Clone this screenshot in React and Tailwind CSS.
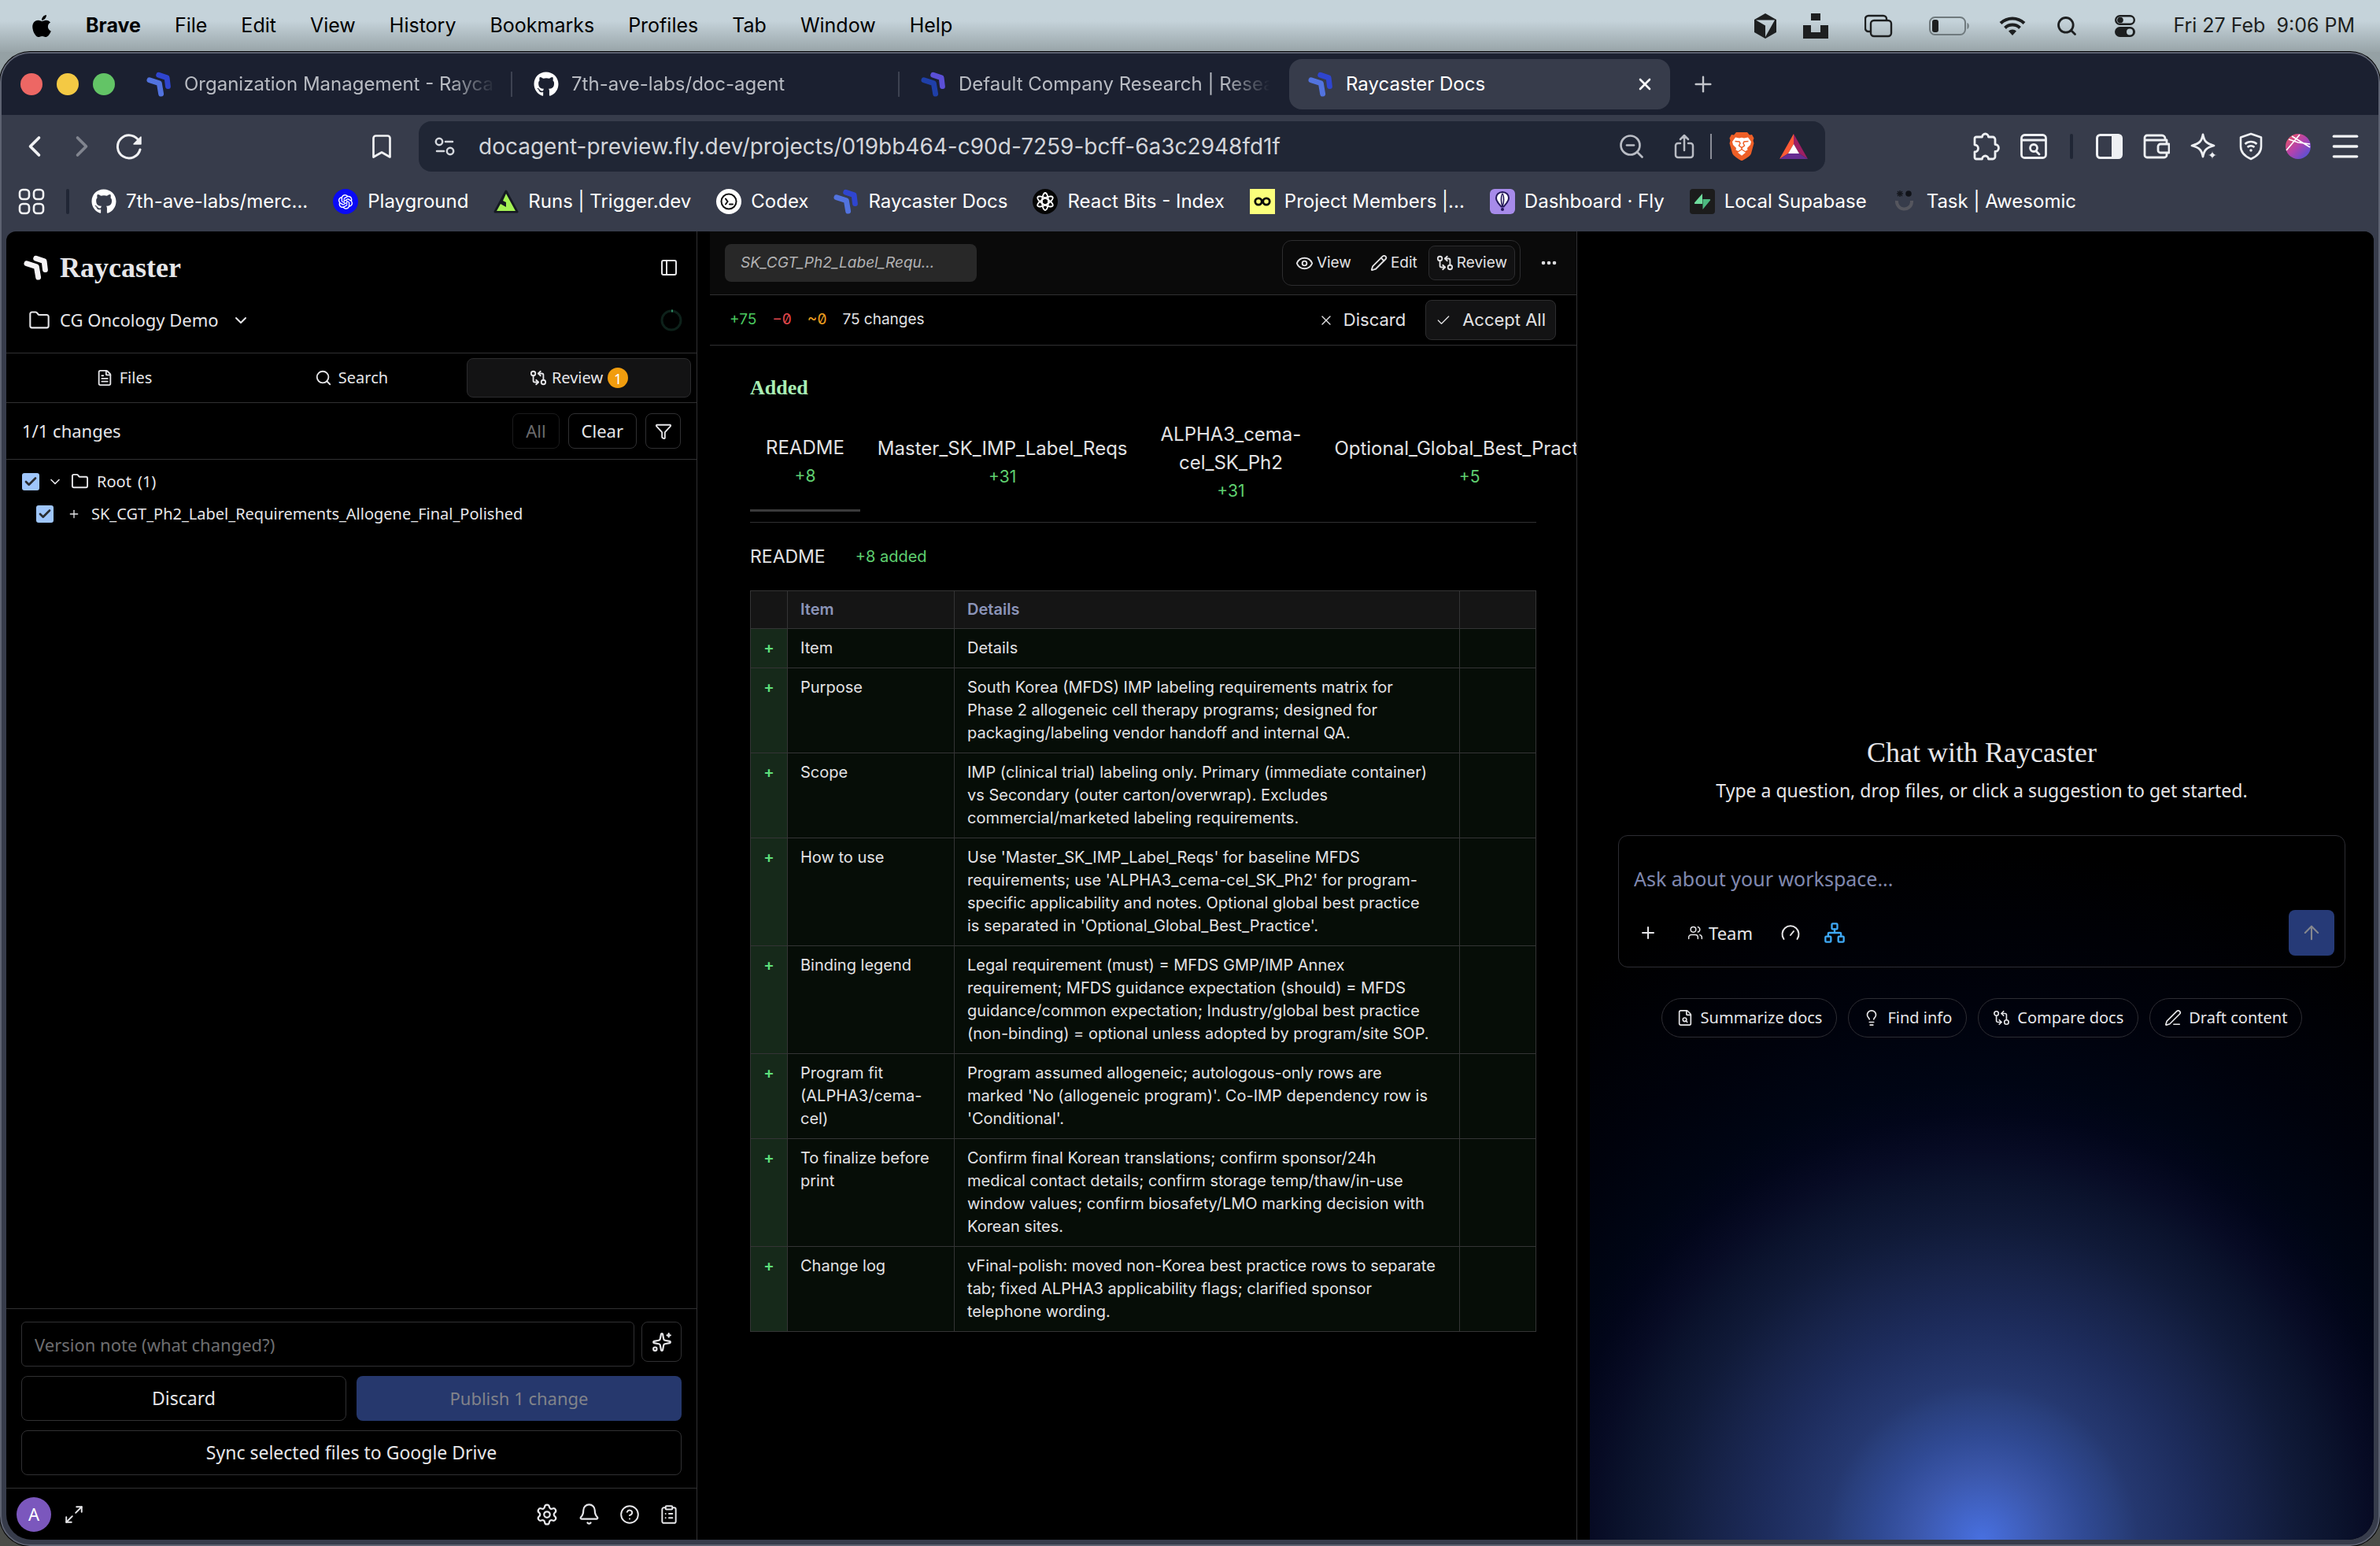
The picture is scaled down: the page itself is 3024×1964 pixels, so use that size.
import React from "react";
import { FaApple, FaGithub } from "react-icons/fa";
import { AiOutlineOpenAI } from "react-icons/ai";
import {
  ArrowUp, Bell, Bookmark, Check, ChevronDown, ChevronLeft, ChevronRight, ClipboardList, Ellipsis, Eye,
  FileSearch, FileText, Filter, Folder, GitCompareArrows, HelpCircle, Lightbulb, Maximize2, Menu, Network,
  PanelLeft, Pencil, PenLine, Plus, Search, Settings, Sparkles, Users, X, ZoomOut,
} from "lucide-react";

/* ---------- logos and custom glyphs ---------- */

function RaycasterMark({ left = "#f5f3f5", right = "#f5f3f5", className = "size-8" }) {
  return (
    <svg viewBox="0 0 96 98" className={className} fill="none" strokeWidth="21" strokeLinecap="round" strokeLinejoin="round" aria-hidden="true">
      <path d="M11 33 L49 45 L56 86" stroke={left} />
      <path d="M47 13 L79 24 L83 57" stroke={right} />
    </svg>
  );
}

function CursorCube() {
  return (
    <svg viewBox="0 0 28 32" className="h-8 w-7" aria-hidden="true">
      <path fill="#1d1f20" fillRule="evenodd" d="M14 0 28 8v16L14 32 0 24V8ZM2 8.500h24L14 30V15.500Z" />
    </svg>
  );
}

function UnsplashMark() {
  return (
    <svg viewBox="0 0 32 32" className="size-8" fill="#1d1f20" aria-hidden="true">
      <path d="M10 0h12v9H10ZM0 15h10v9h12v-9h10v17H0Z" />
    </svg>
  );
}

function StackedWindows() {
  return (
    <svg viewBox="0 0 36 30" className="h-[30px] w-9" fill="none" stroke="#1d1f20" strokeWidth="2.400" aria-hidden="true">
      <path d="M7 22H5a4 4 0 0 1-4-4V6a4 4 0 0 1 4-4h19a4 4 0 0 1 4 4v2" />
      <rect x="8" y="8" width="26" height="20" rx="4" />
    </svg>
  );
}

function Battery() {
  return (
    <svg viewBox="0 0 52 24" className="h-6 w-[52px]" aria-hidden="true">
      <rect x="1" y="1" width="45" height="22" rx="6.500" fill="none" stroke="#6f797d" strokeWidth="2" />
      <rect x="4" y="4" width="8" height="16" rx="3" fill="#1d1f20" />
      <path d="M48.500 8v8c3-1 3-7 0-8Z" fill="#6f797d" />
    </svg>
  );
}

function Wifi() {
  return (
    <svg viewBox="0 0 34 26" className="h-[26px] w-[34px]" fill="none" stroke="#1d1f20" strokeWidth="4" aria-hidden="true">
      <path d="M2 9.500a21.500 21.500 0 0 1 30 0M7.500 15.500a13.500 13.500 0 0 1 19 0" />
      <path d="M17 25l-5-5.500a7 7 0 0 1 10 0Z" fill="#1d1f20" stroke="none" />
    </svg>
  );
}

function ControlCenter() {
  return (
    <svg viewBox="0 0 26 28" className="h-7 w-[26px]" aria-hidden="true">
      <rect x="1.200" y="1.200" width="23.600" height="10.600" rx="5.300" fill="none" stroke="#1d1f20" strokeWidth="2.400" />
      <circle cx="7" cy="6.500" r="3.800" fill="#1d1f20" />
      <rect x="0" y="15" width="26" height="13" rx="6.500" fill="#1d1f20" />
      <circle cx="19" cy="21.500" r="4" fill="#bccbd1" />
    </svg>
  );
}

function ReloadIcon() {
  return (
    <svg viewBox="0 0 36 36" className="size-9" fill="none" stroke="#f1f2f4" strokeWidth="3" strokeLinecap="round" aria-hidden="true">
      <path d="M31 12A14.500 14.500 0 1 0 32 22" />
      <path d="M33 6v9h-9Z" fill="#f1f2f4" strokeWidth="1.500" strokeLinejoin="round" />
    </svg>
  );
}

function TuneIcon() {
  return (
    <svg viewBox="0 0 26 24" className="h-6 w-[26px]" fill="none" stroke="#d5d8de" strokeWidth="2.500" strokeLinecap="round" aria-hidden="true">
      <circle cx="6" cy="6" r="4.200" />
      <path d="M14 6h9M3 18h9" />
      <circle cx="20" cy="18" r="4.200" />
    </svg>
  );
}

function ShareIcon() {
  return (
    <svg viewBox="0 0 26 32" className="h-8 w-[26px]" fill="none" stroke="#b9bcc4" strokeWidth="2.500" strokeLinecap="round" strokeLinejoin="round" aria-hidden="true">
      <path d="M8 12H5a3 3 0 0 0-3 3v12a3 3 0 0 0 3 3h16a3 3 0 0 0 3-3V15a3 3 0 0 0-3-3h-3M13 21V2M8 7l5-5 5 5" />
    </svg>
  );
}

function BraveLion() {
  return (
    <svg viewBox="0 0 32 36" className="h-9 w-8" aria-hidden="true">
      <path fill="#ee5f27" d="M9 0h14l3 3.500 3-.5 2.500 4.500-1 3 1 3.500-3.500 13c-1 3-4 5-12 9.500C8 31.500 5 29.500 4 26.500L.5 14l1-3.500-1-3L3 3l3 .500Z" />
      <path fill="#fff" d="M8 6.500 13 7.500l3-.8 3 .8 5-1L28 12l-1 4-4 4 .5 2.500-3 1.500L16 21l-4.500 3-3-1.500L9 20l-4-4-1-4Z" />
      <path fill="#fff" d="m16 22.500 5 3.300-5 4-5-4Z" />
      <path fill="none" stroke="#ee5f27" strokeWidth="1.500" d="M7.500 11.500 13 12l1 2-1.500 3L16 19.500l3.500-2.500L18 14l1-2 5.500-.500M16 19.500V22" />
    </svg>
  );
}

function BatTriangle() {
  return (
    <svg viewBox="0 0 36 32" className="h-8 w-9" aria-hidden="true">
      <path fill="#ff5a35" d="M18 0v13l-7 12L0 32Z" />
      <path fill="#9e1f63" d="M18 0v13l7 12 11 7Z" />
      <path fill="#662d91" d="M0 32 11 25h14l11 7Z" />
      <path fill="#fff" d="m18 13 7 12H11Z" />
    </svg>
  );
}

function PuzzleIcon() {
  return (
    <svg viewBox="0 0 36 36" className="size-9" fill="none" stroke="#eef0f3" strokeWidth="2.800" strokeLinejoin="round" aria-hidden="true">
      <path d="M5 6h7.500a4 4 0 0 1 8 0H26a3 3 0 0 1 3 3v6.500a4.500 4.500 0 0 1 0 9V31a3 3 0 0 1-3 3h-5.500a4 4 0 0 0-8 0H5a2 2 0 0 1-2-2v-7a4.500 4.500 0 0 0 0-9V8a2 2 0 0 1 2-2Z" />
    </svg>
  );
}

function PageSearch() {
  return (
    <svg viewBox="0 0 34 32" className="h-8 w-[34px]" fill="none" stroke="#eef0f3" strokeWidth="2.800" strokeLinecap="round" aria-hidden="true">
      <rect x="1.500" y="1.500" width="31" height="29" rx="4" />
      <path d="M2 8h30M20 22l4 4" />
      <circle cx="17" cy="18" r="4.500" />
    </svg>
  );
}

function SidePanel() {
  return (
    <svg viewBox="0 0 34 32" className="h-8 w-[34px]" aria-hidden="true">
      <rect x="1.500" y="1.500" width="31" height="29" rx="4" fill="none" stroke="#eef0f3" strokeWidth="3" />
      <path d="M20 2h10a3 3 0 0 1 3 3v22a3 3 0 0 1-3 3H20Z" fill="#eef0f3" />
    </svg>
  );
}

function WalletIcon() {
  return (
    <svg viewBox="0 0 34 32" className="h-8 w-[34px]" fill="none" stroke="#eef0f3" strokeWidth="2.800" strokeLinejoin="round" aria-hidden="true">
      <path d="M30 8v19a3 3 0 0 1-3 3H5a3 3 0 0 1-3-3V5a3 3 0 0 1 3-3h19a4 4 0 0 1 4 4v2Zm0 0H3" />
      <path d="M33 13H22a3 3 0 0 0-3 3v5a3 3 0 0 0 3 3h11Z" fill="#373c4b" />
    </svg>
  );
}

function LeoSparkle() {
  return (
    <svg viewBox="0 0 34 34" className="size-[34px]" aria-hidden="true">
      <path d="M16 2c1.500 8 4 11.500 14 14-10 2.500-12.500 6-14 14-1.500-8-4-11.500-14-14C12 13.500 14.500 10 16 2Z" fill="none" stroke="#eef0f3" strokeWidth="2.800" strokeLinejoin="round" />
      <path d="M28 22c.8 4 2 5 6 6-4 1-5.200 2-6 6-.8-4-2-5-6-6 4-1 5.200-2 6-6Z" fill="#eef0f3" stroke="#373c4b" strokeWidth="1" />
    </svg>
  );
}

function VpnShield() {
  return (
    <svg viewBox="0 0 32 36" className="h-9 w-8" fill="none" stroke="#eef0f3" strokeWidth="2.600" strokeLinejoin="round" aria-hidden="true">
      <path d="M16 2 29 6.500V18c0 8-5 12.500-13 16C8 30.500 3 26 3 18V6.500Z" />
      <path d="M8.500 15a11 11 0 0 1 15 0M11.500 19a7 7 0 0 1 9 0" />
      <circle cx="16" cy="23" r="1.800" fill="#eef0f3" stroke="none" />
    </svg>
  );
}

function ProfileBall() {
  return (
    <svg viewBox="0 0 32 32" className="size-8" aria-hidden="true">
      <defs>
        <linearGradient id="ball" x1="0" y1="0" x2="1" y2="1">
          <stop offset="0" stopColor="#f0565a" />
          <stop offset=".5" stopColor="#b042b0" />
          <stop offset="1" stopColor="#3c56e0" />
        </linearGradient>
      </defs>
      <circle cx="16" cy="16" r="16" fill="url(#ball)" />
      <path d="M1 21 18 1M8 3l23 14M4 7l12 4 15 2" stroke="#fff" strokeWidth="1.600" fill="none" />
    </svg>
  );
}

function AppGrid() {
  return (
    <svg viewBox="0 0 34 34" className="size-[34px]" fill="none" stroke="#f1f2f4" strokeWidth="2.600" aria-hidden="true">
      <rect x="2" y="2" width="12" height="12" rx="4" />
      <rect x="20" y="2" width="12" height="12" rx="4" />
      <rect x="2" y="20" width="12" height="12" rx="4" />
      <rect x="20" y="20" width="12" height="12" rx="4" />
    </svg>
  );
}

function TriggerMark() {
  return (
    <svg viewBox="0 0 32 32" className="size-8" aria-hidden="true">
      <path d="M16 3 30 29H2Z" fill="#151922" stroke="#151922" strokeWidth="3" strokeLinejoin="round" />
      <path d="M16 6 28 28H4L9 19l7 4v-6l-4-2Z" fill="#a4f254" />
    </svg>
  );
}

function CodexMark() {
  return (
    <svg viewBox="0 0 32 32" className="size-8" aria-hidden="true">
      <circle cx="16" cy="16" r="16" fill="#fff" />
      <circle cx="16" cy="16" r="9.500" fill="none" stroke="#111" strokeWidth="2" />
      <path d="m12 12.500 2.500 3.500-2.500 3.500M17 19.500h4" stroke="#111" strokeWidth="2" fill="none" strokeLinecap="round" />
    </svg>
  );
}

function ReactBitsMark() {
  return (
    <svg viewBox="0 0 32 32" className="size-8" fill="none" stroke="#fff" strokeWidth="1.800" aria-hidden="true">
      <circle cx="16" cy="16" r="16" fill="#050505" stroke="none" />
      <ellipse cx="16" cy="16" rx="11" ry="4" transform="rotate(30 16 16)" />
      <ellipse cx="16" cy="16" rx="11" ry="4" transform="rotate(90 16 16)" />
      <ellipse cx="16" cy="16" rx="11" ry="4" transform="rotate(150 16 16)" />
    </svg>
  );
}

function InfinityMark() {
  return (
    <svg viewBox="0 0 32 32" className="size-8" aria-hidden="true">
      <path d="M0 0h32v32H0Z" fill="#fbff7c" />
      <circle cx="11" cy="16" r="4.200" fill="none" stroke="#0a0a0a" strokeWidth="2.800" />
      <circle cx="21" cy="16" r="4.200" fill="none" stroke="#0a0a0a" strokeWidth="2.800" />
    </svg>
  );
}

function FlyMark() {
  return (
    <svg viewBox="0 0 32 32" className="size-8" aria-hidden="true">
      <rect width="32" height="32" rx="6" fill="#a78bea" />
      <path d="M16 4c5 0 8 3.500 8 7.500 0 4.500-4 8-6.500 11h-3C12 19.500 8 16 8 11.500 8 7.500 11 4 16 4Z" fill="#fff" stroke="#24185b" strokeWidth="2" />
      <path d="M16 5c-3 3-3 11-1 17h2c2-6 2-14-1-17Z" fill="#24185b" />
      <path d="M16 7c-1 3-1 9 0 13 1-4 1-10 0-13Z" fill="#fff" />
      <circle cx="16" cy="26" r="2" fill="#24185b" />
    </svg>
  );
}

function SupabaseMark() {
  return (
    <svg viewBox="0 0 32 32" className="size-8" aria-hidden="true">
      <rect width="32" height="32" rx="4" fill="#1c1c1c" />
      <path d="M16 6v13H7c-1 0-1.500-1-.8-1.800Z" fill="#6fdc9d" />
      <path d="M16.500 26V13H25c1 0 1.500 1 .8 1.800Z" fill="#4cb980" />
    </svg>
  );
}

function AwesomicMark() {
  return (
    <svg viewBox="0 0 32 32" className="size-8" aria-hidden="true">
      <path d="M10 2v8M6 6h8M7 3l6 6M13 3 7 9" stroke="#16181f" strokeWidth="1.500" />
      <circle cx="21" cy="6" r="3.800" fill="#101218" />
      <path d="M6 15a9.500 9.500 0 0 0 19 2v-2" fill="none" stroke="#55565e" strokeWidth="4" />
    </svg>
  );
}

function GaugeIcon() {
  return (
    <svg viewBox="0 0 24 20" className="h-5 w-6" fill="none" stroke="#e4e4e6" strokeWidth="2" strokeLinecap="round" aria-hidden="true">
      <path d="M3.500 18a10.500 10.500 0 1 1 17 0M12 13l4-5" />
    </svg>
  );
}

/* ---------- data ---------- */

const menus = ["File", "Edit", "View", "History", "Bookmarks", "Profiles", "Tab", "Window", "Help"];

const tabs = [
  { title: "Organization Management - Raycaster", icon: <RaycasterMark left="#5273df" right="#2f45cf" className="size-8 shrink-0" /> },
  { title: "7th-ave-labs/doc-agent", icon: <FaGithub className="size-8 shrink-0 text-white" /> },
  { title: "Default Company Research | Research", icon: <RaycasterMark left="#1f3fa8" right="#5b4fd6" className="size-8 shrink-0" /> },
];

const bookmarks = [
  { label: "7th-ave-labs/merc...", icon: <FaGithub className="size-8 text-white" /> },
  { label: "Playground", icon: <span className="grid size-8 place-items-center rounded-full bg-[#0a0af5]"><AiOutlineOpenAI className="size-6 text-white" /></span> },
  { label: "Runs | Trigger.dev", icon: <TriggerMark /> },
  { label: "Codex", icon: <CodexMark /> },
  { label: "Raycaster Docs", icon: <RaycasterMark left="#5273df" right="#2f45cf" /> },
  { label: "React Bits - Index", icon: <ReactBitsMark /> },
  { label: "Project Members |...", icon: <InfinityMark /> },
  { label: "Dashboard · Fly", icon: <FlyMark /> },
  { label: "Local Supabase", icon: <SupabaseMark /> },
  { label: "Task | Awesomic", icon: <AwesomicMark /> },
];

const rows = [
  ["Item", "Details"],
  ["Purpose", "South Korea (MFDS) IMP labeling requirements matrix for Phase 2 allogeneic cell therapy programs; designed for packaging/labeling vendor handoff and internal QA."],
  ["Scope", "IMP (clinical trial) labeling only. Primary (immediate container) vs Secondary (outer carton/overwrap). Excludes commercial/marketed labeling requirements."],
  ["How to use", "Use 'Master_SK_IMP_Label_Reqs' for baseline MFDS requirements; use 'ALPHA3_cema-cel_SK_Ph2' for program-specific applicability and notes. Optional global best practice is\u00a0separated in 'Optional_Global_Best_Practice'."],
  ["Binding legend", "Legal requirement (must) = MFDS GMP/IMP Annex requirement; MFDS guidance expectation (should) = MFDS guidance/common expectation; Industry/global best practice (non-binding) = optional unless adopted by program/site SOP."],
  ["Program fit (ALPHA3/cema-cel)", "Program assumed allogeneic; autologous-only rows are marked 'No (allogeneic program)'. Co-IMP dependency row is 'Conditional'."],
  ["To finalize before print", "Confirm final Korean translations; confirm sponsor/24h medical contact details; confirm storage temp/thaw/in-use window values; confirm biosafety/LMO marking decision with Korean\u00a0sites."],
  ["Change log", "vFinal-polish: moved non-Korea best practice rows to separate tab; fixed ALPHA3 applicability flags; clarified sponsor telephone wording."],
];

const suggestions = [
  { label: "Summarize docs", Icon: FileSearch },
  { label: "Find info", Icon: Lightbulb },
  { label: "Compare docs", Icon: GitCompareArrows },
  { label: "Draft content", Icon: PenLine },
];

/* ---------- system menu bar ---------- */

function MenuBar() {
  return (
    <header className="flex h-[66px] shrink-0 items-center justify-between bg-linear-to-b from-[#c5d3da] from-40% to-[#98a4a8] text-[25px] text-black">
      <nav className="flex items-center gap-[43px] pl-10" aria-label="System menu">
        <FaApple className="h-8 w-[26px]" />
        <span className="font-bold">Brave</span>
        {menus.map((m) => <span key={m}>{m}</span>)}
      </nav>
      <div className="flex items-center pr-8 text-[#1d1f20]">
        <span className="grid w-16 place-items-center"><CursorCube /></span>
        <span className="grid w-16 place-items-center"><UnsplashMark /></span>
        <span className="grid w-24 place-items-center"><StackedWindows /></span>
        <span className="grid w-[84px] place-items-center"><Battery /></span>
        <span className="grid w-[76px] place-items-center"><Wifi /></span>
        <span className="grid w-[62px] place-items-center"><Search className="size-7" strokeWidth={2.4} /></span>
        <span className="grid w-[86px] place-items-center"><ControlCenter /></span>
        <span className="flex gap-[14px] pl-[18px]"><span>Fri 27 Feb</span><span>9:06 PM</span></span>
      </div>
    </header>
  );
}

/* ---------- browser chrome ---------- */

function TabStrip() {
  return (
    <div className="flex h-[78px] shrink-0 items-center bg-[#1b2030] pl-6 text-2xl">
      <div className="mr-4 flex gap-[18px]">
        <span className="size-7 rounded-full bg-[#ed6764]" />
        <span className="size-7 rounded-full bg-[#f4c944]" />
        <span className="size-7 rounded-full bg-[#63c466]" />
      </div>
      {tabs.map((t, i) => (
        <React.Fragment key={t.title}>
          {i > 0 && <span className="mx-[3px] h-8 w-[2px] bg-[#3d4251]" />}
          <div className="flex h-16 w-[484px] items-center gap-4 px-4 pl-6 text-[#b9bcc3]">
            {t.icon}
            <span className="flex-1 overflow-hidden whitespace-nowrap mask-r-from-85%">{t.title}</span>
          </div>
        </React.Fragment>
      ))}
      <div className="ml-2 flex h-16 w-[484px] items-center gap-4 rounded-2xl bg-[#373c4b] pr-5 pl-6 text-white">
        <RaycasterMark left="#5273df" right="#2f45cf" className="size-8 shrink-0" />
        <span className="flex-1 whitespace-nowrap">Raycaster Docs</span>
        <button aria-label="Close tab"><X className="size-6" strokeWidth={2.6} /></button>
      </div>
      <button aria-label="New tab" className="ml-[26px] text-[#c3c5cb]"><Plus className="size-8" strokeWidth={1.8} /></button>
    </div>
  );
}

function ToolButton({ label, children }) {
  return <button aria-label={label} className="grid h-16 w-[60px] place-items-center text-[#f1f2f4]">{children}</button>;
}

function Toolbar() {
  return (
    <div className="flex h-20 shrink-0 items-center px-3">
      <ToolButton label="Back"><ChevronLeft className="size-11" strokeWidth={2} /></ToolButton>
      <ToolButton label="Forward"><ChevronRight className="size-11 text-[#81858f]" strokeWidth={2} /></ToolButton>
      <ToolButton label="Reload"><ReloadIcon /></ToolButton>
      <div className="mr-[17px] ml-[261px] flex"><ToolButton label="Bookmark this tab"><Bookmark className="h-[42px] w-9" strokeWidth={1.8} /></ToolButton></div>
      <div className="mr-[175px] flex h-16 flex-1 items-center rounded-2xl bg-[#202635] pr-[22px] pl-5">
        <TuneIcon />
        <input
          aria-label="Address"
          className="ml-[30px] flex-1 bg-transparent text-[28px] text-[#d3d5da] outline-none"
          defaultValue="docagent-preview.fly.dev/projects/019bb464-c90d-7259-bcff-6a3c2948fd1f"
        />
        <ZoomOut className="size-9 text-[#b9bcc4]" strokeWidth={1.8} />
        <span className="mr-5 ml-9"><ShareIcon /></span>
        <span className="mr-[22px] h-8 w-[2px] bg-[#8b8e98]" />
        <BraveLion />
        <span className="ml-8"><BatTriangle /></span>
      </div>
      <ToolButton label="Extensions"><PuzzleIcon /></ToolButton>
      <ToolButton label="Search tabs"><PageSearch /></ToolButton>
      <span className="mx-4 h-8 w-1 rounded bg-[#202635]" />
      <ToolButton label="Side panel"><SidePanel /></ToolButton>
      <ToolButton label="Wallet"><WalletIcon /></ToolButton>
      <ToolButton label="Assistant"><LeoSparkle /></ToolButton>
      <ToolButton label="VPN"><VpnShield /></ToolButton>
      <ToolButton label="Profile"><ProfileBall /></ToolButton>
      <ToolButton label="Menu"><Menu className="size-11" strokeWidth={1.8} /></ToolButton>
    </div>
  );
}

function BookmarksBar() {
  return (
    <div className="flex h-[68px] shrink-0 items-center pb-2 pl-[21px] text-2xl text-white">
      <AppGrid />
      <span className="mr-7 ml-[27px] h-8 w-1 rounded bg-[#202635]" />
      <nav className="flex gap-8" aria-label="Bookmarks">
        {bookmarks.map((b) => (
          <a key={b.label} href="#" className="flex items-center gap-3 whitespace-nowrap">{b.icon}{b.label}</a>
        ))}
      </nav>
    </div>
  );
}

/* ---------- left sidebar ---------- */

function TreeCheckbox({ id }) {
  return (
    <span className="grid size-[22px] place-items-center">
      <input id={id} type="checkbox" defaultChecked className="col-start-1 row-start-1 size-[22px] appearance-none rounded-[3px] bg-[#9fc6fb]" />
      <Check className="pointer-events-none col-start-1 row-start-1 size-[18px] text-[#2b2d31]" strokeWidth={3.6} />
    </span>
  );
}

function Sidebar() {
  return (
    <aside className="flex min-h-0 flex-col border-r border-[#303032] text-[#e6e6e9]">
      <div className="flex items-center justify-between pt-[26px] pr-[23px] pl-[22px]">
        <div className="flex items-center gap-[14px]">
          <RaycasterMark />
          <span className="font-[Liberation_Serif] text-4xl font-bold">Raycaster</span>
        </div>
        <button aria-label="Toggle sidebar"><PanelLeft className="size-6" strokeWidth={2} /></button>
      </div>
      <div className="flex items-center justify-between border-b border-[#303032] pt-[30px] pr-[18px] pb-[25px] pl-7">
        <button className="flex items-center text-[22px]">
          <Folder className="size-7" strokeWidth={1.8} />
          <span className="ml-3">CG Oncology Demo</span>
          <ChevronDown className="ml-4 size-6" strokeWidth={2} />
        </button>
        <svg viewBox="0 0 28 28" className="size-7" fill="none" strokeWidth="3" aria-label="Usage">
          <circle cx="14" cy="14" r="12" stroke="#0d211a" />
          <path d="M14 2h2" stroke="#2f8a63" />
        </svg>
      </div>
      <div role="tablist" className="grid grid-cols-3 gap-1 border-b border-[#303032] px-[7px] py-[6px] text-[20px]">
        <button role="tab" className="flex h-[50px] items-center justify-center gap-2"><FileText className="size-[22px]" />Files</button>
        <button role="tab" className="flex h-[50px] items-center justify-center gap-2"><Search className="size-[22px]" />Search</button>
        <button role="tab" aria-selected="true" className="flex h-[50px] items-center justify-center gap-[6px] rounded-lg border border-[#2c2c2e] bg-[#131314]">
          <GitCompareArrows className="size-[22px]" />Review
          <span className="grid size-[26px] place-items-center rounded-full bg-[#f19d0e] text-lg text-white">1</span>
        </button>
      </div>
      <div className="flex items-center gap-[11px] border-b border-[#303032] py-[13px] pr-5 pl-5 text-[22px]">
        <span className="flex-1">1/1 changes</span>
        <button disabled className="h-[45px] rounded-lg border border-[#1b1b1c] px-4 text-[#6b6b6d]">All</button>
        <button className="h-[45px] rounded-lg border border-[#303032] px-4">Clear</button>
        <button aria-label="Filter changes" className="grid size-[45px] place-items-center rounded-lg border border-[#303032]"><Filter className="size-[22px]" /></button>
      </div>
      <div className="flex flex-1 flex-col pt-[7px] text-[20px]">
        <div className="flex h-[41px] items-center pl-5">
          <TreeCheckbox id="root" />
          <ChevronDown className="mx-[10px] size-5" />
          <Folder className="size-[23px]" />
          <label htmlFor="root" className="ml-[10px]">Root</label>
          <span className="ml-2">(1)</span>
        </div>
        <div className="flex h-[41px] items-center pl-[38px]">
          <TreeCheckbox id="file" />
          <Plus className="mr-[14px] ml-[18px] size-4" />
          <label htmlFor="file" className="whitespace-nowrap">SK_CGT_Ph2_Label_Requirements_Allogene_Final_Polished</label>
        </div>
      </div>
      <div className="flex flex-col gap-3 border-t border-[#303032] px-[19px] py-4 text-[23px]">
        <div className="flex items-start gap-[9px]">
          <input aria-label="Version note" placeholder="Version note (what changed?)" className="h-[57px] flex-1 rounded-md border border-[#303032] bg-transparent px-4 text-[22px] outline-none placeholder:text-[#6e6e71]" />
          <button aria-label="Generate note" className="grid size-[51px] place-items-center rounded-lg border border-[#303032]"><Sparkles className="size-[26px]" /></button>
        </div>
        <div className="grid grid-cols-2 gap-[13px]">
          <button className="h-[57px] rounded-lg border border-[#303032]">Discard</button>
          <button disabled className="h-[57px] rounded-lg bg-[#26386d] text-[22px] text-[#81838a]">Publish 1 change</button>
        </div>
        <button className="h-[57px] rounded-lg border border-[#303032]">Sync selected files to Google Drive</button>
      </div>
      <div className="flex h-[66px] items-center border-t border-[#303032] pr-[22px] pl-[13px]">
        <span className="grid size-11 place-items-center rounded-full bg-[#7b57bd] text-[22px] text-white">A</span>
        <button aria-label="Expand" className="ml-4 flex-1"><Maximize2 className="size-[26px]" strokeWidth={1.8} /></button>
        <div className="flex items-center gap-6">
          <button aria-label="Settings"><Settings className="size-[30px]" strokeWidth={1.8} /></button>
          <button aria-label="Notifications"><Bell className="size-[29px]" strokeWidth={1.8} /></button>
          <button aria-label="Help"><HelpCircle className="size-[26px]" strokeWidth={1.8} /></button>
          <button aria-label="Tasks"><ClipboardList className="size-[26px]" strokeWidth={1.8} /></button>
        </div>
      </div>
    </aside>
  );
}

/* ---------- document diff ---------- */

function SheetTab({ name, count, active }) {
  return (
    <button
      role="tab"
      aria-selected={active ? "true" : "false"}
      className={
        active
          ? "flex shrink-0 flex-col items-center justify-center border-b-[3px] border-[#3a3a3b] px-5 leading-9"
          : "flex shrink-0 flex-col items-center justify-center px-5 leading-9"
      }
    >
      {name.map((line) => <span key={line}>{line}</span>)}
      <span className="text-[21px] text-[#5fd070]">{count}</span>
    </button>
  );
}

function DocumentPane() {
  return (
    <main className="flex min-h-0 min-w-0 flex-col overflow-hidden border-r border-[#303032] text-[#e2e2e4]">
      <div className="flex h-[81px] shrink-0 items-center border-b border-[#303032] bg-[#0a0a0a] pr-[23px] pl-[19px] text-[19px]">
        <div className="flex h-12 w-80 items-center rounded-lg bg-[#282828] px-5 text-[#b2b2b4] italic">SK_CGT_Ph2_Label_Requ...</div>
        <div className="ml-auto flex h-[58px] items-center rounded-xl border border-[#2d2d2f] pr-[6px] pl-4">
          <button className="flex items-center gap-1"><Eye className="size-[23px]" />View</button>
          <button className="ml-6 flex items-center gap-1"><Pencil className="size-[22px]" />Edit</button>
          <button className="ml-[14px] flex h-11 items-center gap-1 rounded-lg border border-[#2d2d2f] bg-[#111112] px-[9px]"><GitCompareArrows className="size-[22px]" />Review</button>
        </div>
        <button aria-label="More" className="ml-6"><Ellipsis className="size-6" strokeWidth={2.6} /></button>
      </div>
      <div className="flex h-16 shrink-0 items-center border-b border-[#303032] pr-[26px] pl-[25px] text-[19px]">
        <span className="text-[#4ac95f]">+75</span>
        <span className="ml-5 text-[#e5484d] [font-feature-settings:'zero']">−0</span>
        <span className="ml-5 text-[#f0a020] [font-feature-settings:'zero']">~0</span>
        <span className="ml-5 flex-1">75 changes</span>
        <button className="flex items-center gap-3 text-[22px]"><X className="size-5" strokeWidth={1.6} />Discard</button>
        <button className="ml-[25px] flex h-[51px] items-center gap-[14px] rounded-lg border border-[#2d2d2f] bg-[#131314] px-3 text-[22px]"><Check className="size-5" strokeWidth={1.6} />Accept All</button>
      </div>
      <div className="px-[51px]">
        <h2 className="pt-[38px] font-[Liberation_Serif] text-[26px] leading-8 font-bold text-[#a9eeb4]">Added</h2>
        <div role="tablist" className="mt-[17px] flex h-[138px] items-stretch gap-[2px] border-b border-[#303032] pb-[13px] text-2xl">
          <SheetTab name={["README"]} count="+8" active />
          <SheetTab name={["Master_SK_IMP_Label_Reqs"]} count="+31" />
          <SheetTab name={["ALPHA3_cema-", "cel_SK_Ph2"]} count="+31" />
          <SheetTab name={["Optional_Global_Best_Practice"]} count="+5" />
        </div>
        <div className="flex items-center gap-[38px] py-6 leading-[38px]">
          <h3 className="text-[23px]">README</h3>
          <span className="text-[20px] text-[#5fd070]">+8 added</span>
        </div>
        <table className="w-full table-fixed border-collapse text-left text-[20px] leading-[29px]">
          <thead>
            <tr className="bg-[#151515] text-[#8b94b8] *:border *:border-[#343435] *:px-4 *:py-[9px] *:font-semibold">
              <th className="w-[47px]" aria-label="Change" />
              <th className="w-[212px]">Item</th>
              <th>Details</th>
              <th className="w-[97px]" aria-label="Notes" />
            </tr>
          </thead>
          <tbody>
            {rows.map(([item, details]) => (
              <tr key={item} className="bg-[#060d07] align-top *:border *:border-[#343435] *:py-[10px]">
                <td className="bg-[#16291a] text-center font-semibold text-[#5fe07c]">+</td>
                <td className="px-4">{item}</td>
                <td className="pr-[27px] pl-4">{details}</td>
                <td />
              </tr>
            ))}
          </tbody>
        </table>
      </div>
    </main>
  );
}

/* ---------- chat ---------- */

function ChatPane() {
  return (
    <section className="flex min-h-0 pl-4 text-[#e6e6e9]">
      <div className="flex flex-1 flex-col items-center bg-[radial-gradient(circle_at_50%_100%,#4870e0_0px,#3b57ab_84px,#304a94_130px,#293f7c_177px,#253870_198px,#1d2c5c_274px,#172349_342px,#101a38_401px,#0b132d_452px,#070b24_495px,#02061a_540px,#000514_580px,#00020c_680px,#000_880px)] pt-[640px] pr-9 pl-9">
        <h1 className="font-[Liberation_Serif] text-4xl leading-11">Chat with Raycaster</h1>
        <p className="mt-[10px] text-[23px] leading-8">Type a question, drop files, or click a suggestion to get started.</p>
        <form className="mt-[41px] flex h-[168px] w-full flex-col rounded-xl border border-[#2d2d33] pt-[34px] pr-[13px] pl-[19px]">
          <input aria-label="Message" placeholder="Ask about your workspace..." className="h-10 bg-transparent text-[25px] outline-none placeholder:text-[#8089b0]" />
          <div className="mt-5 flex h-[58px] items-center text-[22px]">
            <button type="button" aria-label="Attach" className="ml-[6px]"><Plus className="size-6" strokeWidth={2} /></button>
            <button type="button" className="ml-[38px] flex items-center gap-[7px]"><Users className="size-5" strokeWidth={1.8} />Team</button>
            <button type="button" aria-label="Effort" className="ml-9"><GaugeIcon /></button>
            <button type="button" aria-label="Connections" className="ml-[30px] text-[#3fa9f5]"><Network className="size-7" strokeWidth={2} /></button>
            <button type="submit" aria-label="Send" disabled className="ml-auto grid size-[58px] place-items-center rounded-lg bg-[#263a77] text-[#85878e]"><ArrowUp className="size-7" strokeWidth={1.8} /></button>
          </div>
        </form>
        <div className="mt-[39px] flex gap-[14px] text-[20px]">
          {suggestions.map(({ label, Icon }) => (
            <button key={label} className="flex h-[50px] items-center gap-[9px] rounded-full border border-[#2d2d33] px-[18px] whitespace-nowrap">
              <Icon className="size-[22px]" strokeWidth={1.8} />{label}
            </button>
          ))}
        </div>
      </div>
    </section>
  );
}

export default function App() {
  return (
    <div className="flex h-screen flex-col bg-[#4a5055] bg-linear-to-b from-[#98a4a8] to-[#4a4c48] font-[Inter,sans-serif]">
      <MenuBar />
      <div className="flex min-h-0 flex-1 flex-col overflow-hidden rounded-[38px] border-2 border-[#5d6271] bg-[#373c4b] ring-1 ring-black">
        <TabStrip />
        <div className="flex min-h-0 flex-1 flex-col">
          <Toolbar />
          <BookmarksBar />
          <div className="mx-[6px] mb-[6px] grid min-h-0 flex-1 grid-cols-[878fr_16px_1102fr_1012fr] overflow-hidden rounded-t-xl rounded-b-[32px] bg-black font-['Noto_Sans',sans-serif]">
            <Sidebar />
            <div />
            <div className="grid min-h-0 min-w-0 font-[Inter,sans-serif]"><DocumentPane /></div>
            <ChatPane />
          </div>
        </div>
      </div>
    </div>
  );
}
